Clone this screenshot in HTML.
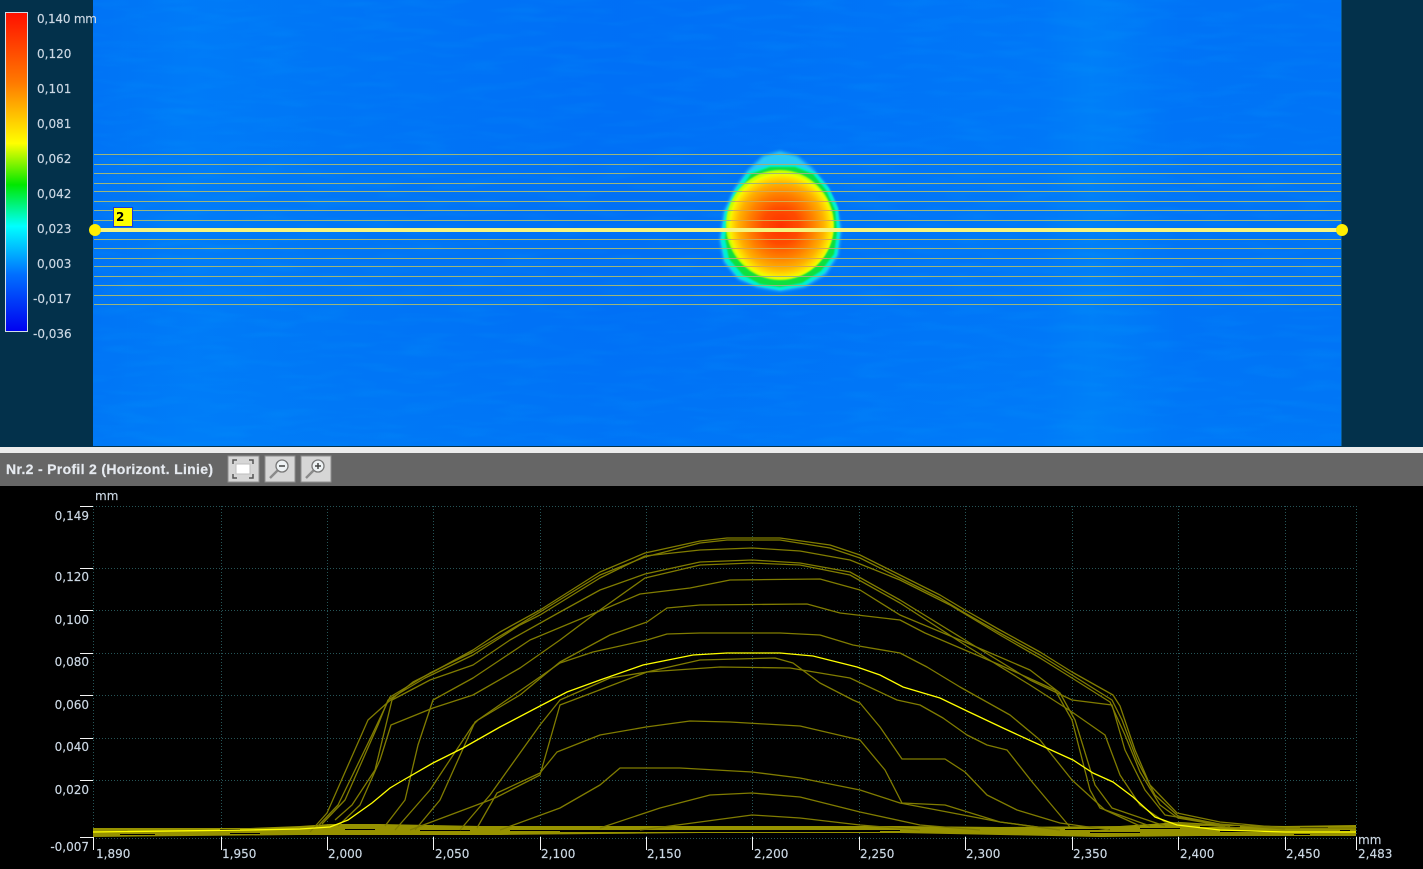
<!DOCTYPE html>
<html><head><meta charset="utf-8"><title>Profil</title>
<style>
html,body{margin:0;padding:0;background:#000;width:1423px;height:869px;overflow:hidden}
svg{display:block;filter:blur(.35px)}
text{font-family:"DejaVu Sans","Liberation Sans",sans-serif;font-size:12px;fill:#ccd8e4;stroke:#ccd8e4;stroke-width:.15px}
.c{fill:none;stroke:#807c00;stroke-width:1.3;stroke-linejoin:round}
.g{stroke:#265558;stroke-width:1;stroke-dasharray:1 2;fill:none}
.t{stroke:#f4f4f4;stroke-width:1;fill:none;shape-rendering:crispEdges}
</style></head><body>
<svg width="1423" height="869" viewBox="0 0 1423 869" xmlns="http://www.w3.org/2000/svg">
<defs>
<linearGradient id="cb" x1="0" y1="0" x2="0" y2="1">
<stop offset="0" stop-color="#ff1000"/><stop offset=".22" stop-color="#ff7a00"/><stop offset=".41" stop-color="#ffff00"/><stop offset=".54" stop-color="#00e800"/><stop offset=".67" stop-color="#00ffff"/><stop offset=".82" stop-color="#0070ff"/><stop offset="1" stop-color="#0000f0"/>
</linearGradient>
<linearGradient id="bgx" x1="0" y1="0" x2="1" y2="0">
<stop offset="0" stop-color="#0074f6"/><stop offset=".08" stop-color="#007cf8"/><stop offset=".2" stop-color="#0076f6"/><stop offset=".42" stop-color="#0070f6"/><stop offset=".6" stop-color="#0074f7"/><stop offset=".76" stop-color="#0078f8"/><stop offset=".8" stop-color="#0080f8"/><stop offset=".87" stop-color="#0074f7"/><stop offset="1" stop-color="#0074f6"/>
</linearGradient>
<linearGradient id="bgy" x1="0" y1="0" x2="0" y2="1">
<stop offset="0" stop-color="#0064f0" stop-opacity=".06"/><stop offset=".5" stop-color="#0064f0" stop-opacity="0"/><stop offset="1" stop-color="#0088f8" stop-opacity=".2"/>
</linearGradient>
<radialGradient id="hot" gradientUnits="userSpaceOnUse" cx="781" cy="226" r="52">
<stop offset="0" stop-color="#ff3200"/><stop offset=".35" stop-color="#ff4c00"/><stop offset=".62" stop-color="#ff8000"/><stop offset=".82" stop-color="#ffb000"/><stop offset=".94" stop-color="#ffe000"/><stop offset="1" stop-color="#f0ff00"/>
</radialGradient>
<filter id="b1" x="-20%" y="-20%" width="140%" height="140%"><feGaussianBlur stdDeviation=".9"/></filter>
<filter id="b2" x="-20%" y="-20%" width="140%" height="140%"><feGaussianBlur stdDeviation="1.6"/></filter>
<filter id="noise" x="0" y="0" width="100%" height="100%"><feTurbulence type="fractalNoise" baseFrequency="0.02 0.12" numOctaves="2" seed="7"/><feColorMatrix values="0 0 0 0 0  0 0 0 0 .6  0 0 0 0 1  1.4 0 0 0 -.62"/></filter>
<clipPath id="plot"><rect x="93" y="500" width="1263" height="340"/></clipPath>
</defs>

<!-- top panel -->
<rect x="0" y="0" width="1423" height="447" fill="#03314b"/>
<rect x="93" y="0" width="1248" height="446" fill="url(#bgx)"/>
<rect x="93" y="0" width="1248" height="446" fill="url(#bgy)"/>
<rect x="93" y="0" width="1248" height="446" filter="url(#noise)" opacity=".14"/>
<rect x="1341" y="0" width="1" height="446" fill="#0a5a90"/>
<rect x="0" y="446" width="1341" height="1" fill="#02304a"/>

<!-- blob -->
<path filter="url(#b2)" fill="#2cc8fa" d="M763 156 L780 151 L797 156 L812 168 L826 185 L836 205 L841 230 L838 255 L826 274 L805 287 L780 291 L757 287 L738 279 L724 262 L720 240 L724 212 L735 188 L748 170 Z"/>
<path filter="url(#b1)" fill="#00f0d0" d="M748 172 L770 165 L795 165 L815 172 L829 188 L838 208 L840 232 L837 255 L824 273 L804 286 L780 290 L757 286 L739 278 L725 261 L721 240 L725 212 L735 190 Z"/>
<path filter="url(#b1)" fill="#10e040" d="M751 174 L770 167 L795 167 L813 174 L826 190 L835 210 L837 232 L834 254 L821 271 L802 283 L780 287 L760 284 L743 275 L729 259 L725 238 L729 212 L738 193 Z"/>
<ellipse cx="780" cy="225" rx="54" ry="55" fill="#c8ff00" filter="url(#b1)"/>
<ellipse cx="781" cy="226" rx="52" ry="53" fill="url(#hot)" filter="url(#b1)"/>

<!-- profile lines -->
<g stroke="#9cb67a" stroke-width="1" shape-rendering="crispEdges">
<path d="M94 154.500H1341M94 164.500H1341M94 173.500H1341M94 183.500H1341M94 191.500H1341M94 201.500H1341M94 210.500H1341M94 220.500H1341M94 239.500H1341M94 248.500H1341M94 258.500H1341M94 266.500H1341M94 276.500H1341M94 285.500H1341M94 295.500H1341M94 304.500H1341"/>
</g>
<g stroke="#ffa030" stroke-width="1" shape-rendering="crispEdges" opacity=".6">
<path d="M742 191.500H822M735 201.500H828M733 210.500H830M731 220.500H832M731 239.500H832M733 248.500H830M736 258.500H827M741 266.500H822"/>
</g>
<rect x="94" y="228" width="1248" height="4" fill="#f6f47e"/>
<circle cx="95" cy="230" r="6" fill="#ffee00"/>
<circle cx="1342" cy="230" r="6" fill="#ffee00"/>
<rect x="113.500" y="207.500" width="19" height="19" fill="#ffff00" stroke="#2438d8"/>
<text x="116" y="221" style="font-size:12px;font-weight:bold;fill:#000;stroke:none">2</text>

<!-- colour bar -->
<rect x="5.500" y="12.500" width="22" height="319" fill="url(#cb)" stroke="#d0dde8"/>
<g>
<text x="37" y="23" textLength="60">0,140 mm</text>
<text x="37" y="58">0,120</text>
<text x="37" y="93">0,101</text>
<text x="37" y="128">0,081</text>
<text x="37" y="163">0,062</text>
<text x="37" y="198">0,042</text>
<text x="37" y="233">0,023</text>
<text x="37" y="268">0,003</text>
<text x="33" y="303">-0,017</text>
<text x="33" y="338">-0,036</text>
</g>

<!-- separator & toolbar -->
<rect x="0" y="447" width="1423" height="6" fill="#ececec"/>
<rect x="0" y="453" width="1423" height="33" fill="#666666"/>
<text id="ttl" x="6" y="474" style="font-family:'Liberation Sans',sans-serif;font-size:14px;font-weight:bold;fill:#e6eaf0;stroke:#e6eaf0;stroke-width:.2px" textLength="207" lengthAdjust="spacing">Nr.2 - Profil 2 (Horizont. Linie)</text>

<!-- buttons -->
<g>
<rect x="228" y="456" width="31" height="26" fill="#d6d6d6" stroke="#8e8e8e" stroke-width="1"/>
<rect x="236" y="464" width="14" height="10" fill="#ffffff" stroke="#bdbdbd"/>
<path d="M233 464V460H237M249 460H253V464M253 474V478H249M237 478H233V474" fill="none" stroke="#555" stroke-width="1.500"/>
<rect x="265" y="456" width="30" height="26" fill="#d6d6d6" stroke="#8e8e8e" stroke-width="1"/>
<circle cx="282" cy="466" r="6" fill="#eef2f4" stroke="#777" stroke-width="1.300"/>
<path d="M279 466H285" stroke="#444" stroke-width="1.500"/>
<path d="M277.500 470.500L270 478" stroke="#8a8a8a" stroke-width="2.400"/>
<rect x="301" y="456" width="30" height="26" fill="#d6d6d6" stroke="#8e8e8e" stroke-width="1"/>
<circle cx="318" cy="466" r="6" fill="#eef2f4" stroke="#777" stroke-width="1.300"/>
<path d="M315 466H321M318 463V469" stroke="#444" stroke-width="1.500"/>
<path d="M313.500 470.500L306 478" stroke="#8a8a8a" stroke-width="2.400"/>
</g>

<!-- bottom plot -->
<rect x="0" y="486" width="1423" height="383" fill="#000"/>
<g class="g">
<path d="M93 506.500H1356M93 568.500H1356M93 610.500H1356M93 653.500H1356M93 695.500H1356M93 738.500H1356M93 780.500H1356M93 838.500H1356"/>
<path d="M93.500 506V838M221.500 506V838M327.500 506V838M433.500 506V838M540.500 506V838M646.500 506V838M752.500 506V838M859.500 506V838M965.500 506V838M1072.500 506V838M1178.500 506V838M1285.500 506V838M1356.500 506V838"/>
</g>

<g clip-path="url(#plot)">
<!-- baseline band -->
<path fill="#969200" d="M93 828H250L300 826L330 824L380 824L480 826L600 826H900L1000 827L1120 826L1180 822L1230 825L1285 826L1356 825V836H1285L1200 836L1100 837L1000 835L900 833L700 833L500 835L300 835L93 837Z"/>
<g stroke="#000" stroke-width="1" fill="none" shape-rendering="crispEdges">
<path d="M220 829.500H240M345 829.500H375M420 830.500H470M510 830.500H900M1065 829.500H1110M1140 828.500H1180M1200 826.500H1240M1300 827.500H1328M1340 830.500H1350M120 834.500H155M230 833.500H260M1090 832.500H1140M1220 831.500H1270M1294 834.500H1310M560 831.500H880"/>
</g>
<!-- upper envelope group -->
<path class="c" d="M310 832L327 813L368 720L387 703L413 682L433 672L473 650L500 632L540 610L600 572L645 553L700 541L727 538L780 538L830 545L860 555L900 575L940 595L965 610L1000 630L1040 652L1072 672L1113 695L1120 706L1135 750L1150 785L1177 813L1220 822L1285 828L1356 828"/>
<path class="c" d="M318 826L338 805L372 735L390 697L430 673L473 652L500 636L540 612L600 575L645 557L700 543L727 540L780 540L830 548L860 558L900 578L940 598L965 613L1000 633L1040 655L1072 675L1112 700L1122 720L1137 760L1155 795L1178 816L1220 824L1285 829"/>
<path class="c" d="M322 824L345 800L378 725L388 700L425 678L473 655L520 625L540 615L600 578L645 556L700 550L752 548L800 551L850 560L900 580L950 605L1000 635L1040 658L1072 678L1110 702L1125 735L1140 772L1160 805L1178 818L1225 826"/>
<path class="c" d="M335 820L352 805L375 770L392 700L430 680L473 665L510 640L560 612L600 590L645 574L700 562L752 560L800 563L850 572L900 600L965 640L1030 680L1072 700L1112 705L1125 750L1145 790L1165 815L1230 826"/>
<path class="c" d="M338 826L360 805L380 760L391 725L433 708L473 695L520 668L560 640L600 610L645 578L700 565L752 563L800 565L850 575L900 603L965 645L1030 685L1072 712L1105 735L1120 775L1140 805L1165 822L1240 828"/>
<path class="c" d="M385 826L405 800L418 745L433 700L473 678L530 640L590 615L640 594L690 588L730 580L820 579L860 590L900 615L960 640L1030 670L1060 693L1075 720L1095 785L1112 808L1165 826"/>
<path class="c" d="M395 830L430 790L473 725L478 720L520 695L560 662L610 635L647 622L667 608L700 605L807 604L840 613L900 620L925 633L1000 665L1055 690L1072 720L1090 790L1100 808L1150 826"/>
<path class="c" d="M415 830L440 800L475 722L560 663L593 652L647 640L667 634L700 633L780 633L820 635L853 645L900 653L927 667L960 687L1010 715L1040 740L1072 780L1105 810L1140 826"/>
<path class="c" d="M460 830L490 795L540 725L560 700L610 678L647 672L700 660L775 658L793 663L820 683L853 700L860 703L880 727L902 759L945 759L965 772L987 795L1017 810L1060 823L1110 830"/>
<path class="c" d="M410 830L490 800L497 797L540 775L560 705L647 672L720 667L790 668L850 678L897 700L920 705L943 718L967 735L987 745L1007 750L1033 783L1070 827"/>
<path class="c" d="M477 828L497 793L540 773L557 752L600 735L646 727L690 721L730 722L800 726L860 740L885 770L902 803L945 805L1000 822L1060 830"/>
<path class="c" d="M500 830L560 808L600 785L620 768L680 768L752 772L800 778L860 790L900 803L1000 822L1060 830"/>
<path class="c" d="M600 828L660 808L710 795L752 793L800 797L860 812L920 825L980 830"/>
<path class="c" d="M640 830L700 822L752 815L800 818L860 825L920 830"/>
<!-- highlighted profile -->
<path fill="none" stroke="#ffff00" stroke-width="1.300" d="M93 832L250 830L300 829L330 827L348 820L372 803L390 788L400 782L433 763L463 748L500 727L540 706L567 692L600 680L643 665L693 655L727 653L780 653L813 656L857 667L880 675L903 687L940 698L967 711L1003 728L1040 745L1073 760L1093 773L1113 782L1133 797L1155 817L1177 825L1220 830L1285 832L1356 832"/>
</g>

<!-- ticks -->
<path class="t" d="M80 506.500H93M80 568.500H93M80 610.500H93M80 653.500H93M80 695.500H93M80 738.500H93M80 780.500H93M80 837.500H93M93.500 837V850M221.500 837V850M327.500 837V850M433.500 837V850M540.500 837V850M646.500 837V850M752.500 837V850M859.500 837V850M965.500 837V850M1072.500 837V850M1178.500 837V850M1285.500 837V850M1356.500 837V850"/>

<g style="font-size:12px">
<text x="95" y="500">mm</text>
<g text-anchor="end">
<text x="89" y="520">0,149</text>
<text x="89" y="581">0,120</text>
<text x="89" y="624">0,100</text>
<text x="89" y="666">0,080</text>
<text x="89" y="709">0,060</text>
<text x="89" y="751">0,040</text>
<text x="89" y="794">0,020</text>
<text x="89" y="851">-0,007</text>
</g>
<text x="96" y="858">1,890</text>
<text x="222" y="858">1,950</text>
<text x="328" y="858">2,000</text>
<text x="435" y="858">2,050</text>
<text x="541" y="858">2,100</text>
<text x="647" y="858">2,150</text>
<text x="754" y="858">2,200</text>
<text x="860" y="858">2,250</text>
<text x="966" y="858">2,300</text>
<text x="1073" y="858">2,350</text>
<text x="1180" y="858">2,400</text>
<text x="1286" y="858">2,450</text>
<text x="1358" y="844">mm</text>
<text x="1358" y="858">2,483</text>
</g>
</svg>
</body></html>
